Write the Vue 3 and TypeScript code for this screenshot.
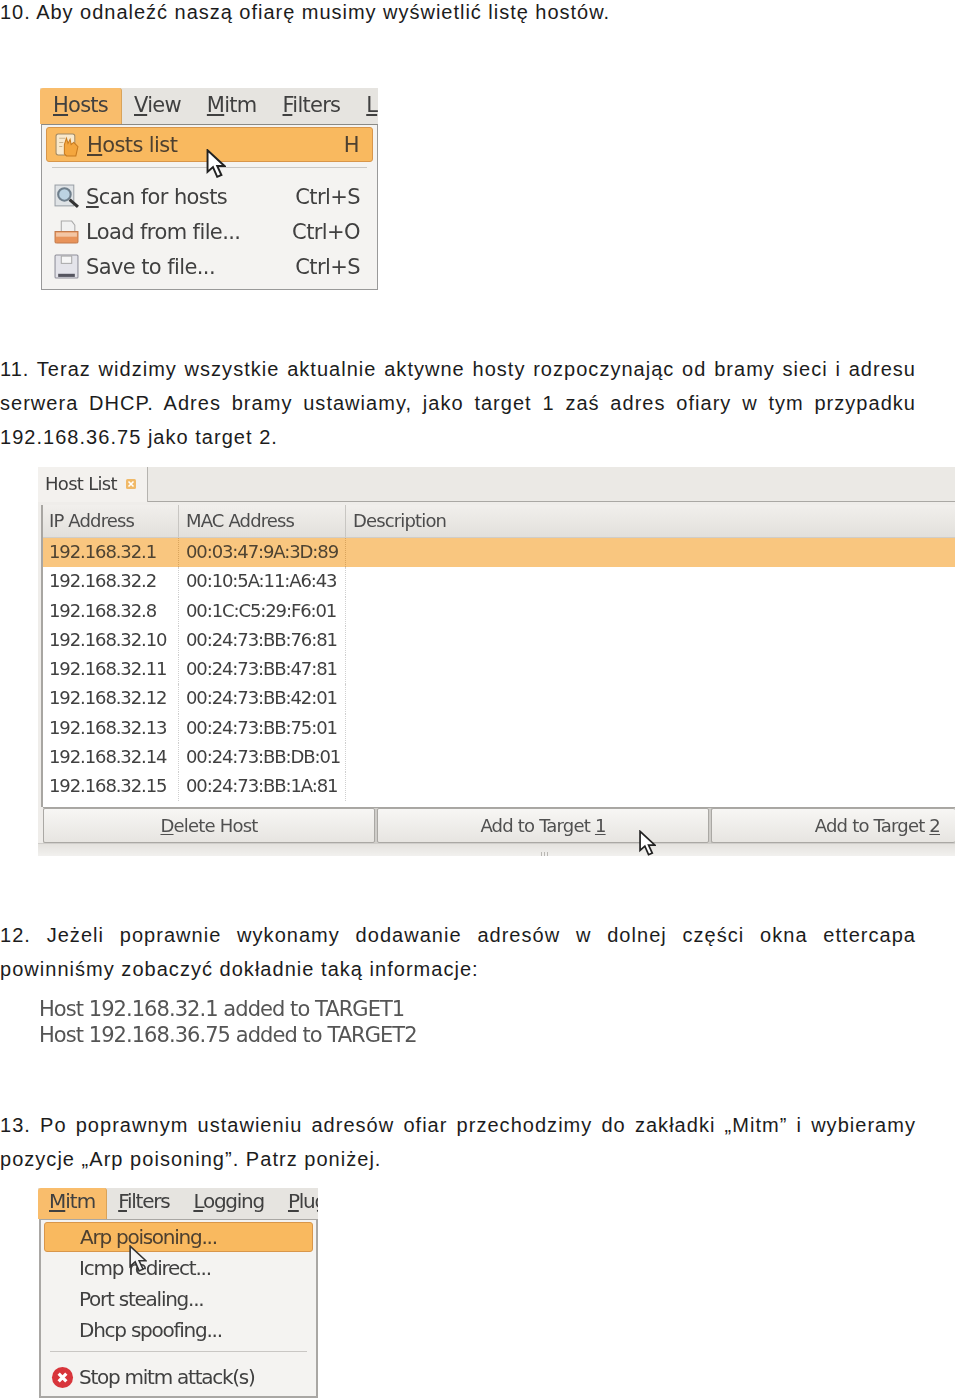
<script setup lang="ts">
const hosts: [string, string][] = [
  ['192.168.32.1', '00:03:47:9A:3D:89'],
  ['192.168.32.2', '00:10:5A:11:A6:43'],
  ['192.168.32.8', '00:1C:C5:29:F6:01'],
  ['192.168.32.10', '00:24:73:BB:76:81'],
  ['192.168.32.11', '00:24:73:BB:47:81'],
  ['192.168.32.12', '00:24:73:BB:42:01'],
  ['192.168.32.13', '00:24:73:BB:75:01'],
  ['192.168.32.14', '00:24:73:BB:DB:01'],
  ['192.168.32.15', '00:24:73:BB:1A:81'],
]
const mitmItems = ['Icmp redirect...', 'Port stealing...', 'Dhcp spoofing...']
const cursorPath = 'M1 1 L1 19 L5.5 15 L9 23 L12.5 21.5 L9 14 L15 14 Z'
</script>

<template>
  <main class="page">
    <p class="line first">10. Aby odnaleźć naszą ofiarę musimy wyświetlić listę hostów.</p>

    <section class="shot hosts-menu">
      <div class="menubar">
        <span class="tab active"><u>H</u>osts</span>
        <span class="tab"><u>V</u>iew</span>
        <span class="tab"><u>M</u>itm</span>
        <span class="tab"><u>F</u>ilters</span>
        <span class="tab"><u>L</u></span>
      </div>
      <div class="dropdown">
        <div class="item selected">
          <svg class="icon" viewBox="0 0 24 24"><rect x="1" y="2" width="18" height="20" rx="2" fill="#f9e9cc" stroke="#a08a66"/><path d="M4 6 H10 M4 10 H8 M4 14 H7" stroke="#c9b48f"/><path d="M9 21 V12 L11 6 L12.5 11 L14.5 7 L15.5 12 L18 10 L22 14 L20 23 H11 Z" fill="#f4a63e" stroke="#c87a1e"/></svg>
          <span class="label"><u>H</u>osts list</span><span class="key">H</span>
        </div>
        <div class="sep"></div>
        <div class="item">
          <svg class="icon" viewBox="0 0 24 24"><rect x="1" y="1" width="18" height="20" fill="#dfe3e6" stroke="#9aa0a6"/><circle cx="10" cy="10" r="6" fill="#bcd3e2" stroke="#6f7f8c" stroke-width="2"/><path d="M15 15 L23 22" stroke="#333" stroke-width="3"/></svg>
          <span class="label"><u>S</u>can for hosts</span><span class="key">Ctrl+S</span>
        </div>
        <div class="item">
          <svg class="icon" viewBox="0 0 24 24"><path d="M7 2 H17 L20 6 V13 H7 Z" fill="#f1f1f1" stroke="#aaa"/><path d="M1 12 H23 V22 Q23 23 21 23 H3 Q1 23 1 22 Z" fill="#e8935a" stroke="#c47a4a"/><path d="M2 13 H22 V17 H2 Z" fill="#f3c6a4"/></svg>
          <span class="label">Load from file...</span><span class="key">Ctrl+O</span>
        </div>
        <div class="item">
          <svg class="icon" viewBox="0 0 24 24"><rect x="1" y="1" width="22" height="22" rx="1" fill="#e4e4ea" stroke="#8d8d98"/><rect x="7" y="2" width="10" height="7" fill="#f6f6f6" stroke="#aaa"/><rect x="4" y="19" width="16" height="3" fill="#55555f"/></svg>
          <span class="label">Save to file...</span><span class="key">Ctrl+S</span>
        </div>
      </div>
      <svg class="cursor cursor-a" viewBox="0 0 16 24"><path :d="cursorPath" fill="#fff" stroke="#222" stroke-width="1.6"/></svg>
    </section>

    <p class="line gap-a justify">11. Teraz widzimy wszystkie aktualnie aktywne hosty rozpoczynając od bramy sieci i adresu</p>
    <p class="line justify">serwera DHCP. Adres bramy ustawiamy, jako target 1 zaś adres ofiary w tym przypadku</p>
    <p class="line">192.168.36.75 jako target 2.</p>

    <section class="shot host-list">
      <div class="notebook">
        <div class="nb-tab">Host List
          <svg class="close" viewBox="0 0 12 12"><rect x="1" y="1" width="10" height="10" rx="1.5" fill="#f0b968"/><path d="M3.5 3.5 L8.5 8.5 M8.5 3.5 L3.5 8.5" stroke="#fff" stroke-width="1.6"/></svg>
        </div>
        <div class="nb-rest"></div>
      </div>
      <div class="table">
        <div class="row head">
          <span class="cell">IP Address</span><span class="cell">MAC Address</span><span class="cell">Description</span>
        </div>
        <div v-for="(h, i) in hosts" :key="h[0]" class="row" :class="{ sel: i === 0 }">
          <span class="cell">{{ h[0] }}</span><span class="cell">{{ h[1] }}</span><span class="cell"></span>
        </div>
      </div>
      <div class="buttons">
        <div class="btn"><span><u>D</u>elete Host</span></div>
        <div class="btn"><span>Add to Target <u>1</u></span></div>
        <div class="btn btn-end"><span>Add to Target <u>2</u></span></div>
      </div>
      <div class="grip"><span class="dots"></span></div>
      <svg class="cursor cursor-b" viewBox="0 0 16 24"><path :d="cursorPath" fill="#fff" stroke="#222" stroke-width="1.6"/></svg>
    </section>

    <p class="line gap-a justify">12. Jeżeli poprawnie wykonamy dodawanie adresów w dolnej części okna ettercapa</p>
    <p class="line">powinniśmy zobaczyć dokładnie taką informacje:</p>

    <section class="shot log">
      <div>Host 192.168.32.1 added to TARGET1</div>
      <div>Host 192.168.36.75 added to TARGET2</div>
    </section>

    <p class="line gap-b justify">13. Po poprawnym ustawieniu adresów ofiar przechodzimy do zakładki „Mitm” i wybieramy</p>
    <p class="line">pozycje „Arp poisoning”. Patrz poniżej.</p>

    <section class="shot mitm-menu">
      <div class="menubar small">
        <span class="tab active"><u>M</u>itm</span>
        <span class="tab"><u>F</u>ilters</span>
        <span class="tab"><u>L</u>ogging</span>
        <span class="tab"><u>P</u>lug</span>
      </div>
      <div class="dropdown small">
        <div class="item selected"><span class="label">Arp poisoning...</span></div>
        <div v-for="m in mitmItems" :key="m" class="item"><span class="label">{{ m }}</span></div>
        <div class="sep"></div>
        <div class="item stop">
          <svg class="stop-icon" viewBox="0 0 24 24"><circle cx="12" cy="12" r="11" fill="#d8353b"/><path d="M8 8 L16 16 M16 8 L8 16" stroke="#fff" stroke-width="3.4"/></svg>
          <span class="label">Stop mitm attack(s)</span>
        </div>
      </div>
      <svg class="cursor cursor-c" viewBox="0 0 16 24"><path :d="cursorPath" fill="#f5f5f5" stroke="#333" stroke-width="1.4"/></svg>
    </section>
  </main>
</template>

<style>
html, body { background: #fff; }
</style>

<style scoped>
.page {
  width: 960px;
  height: 1399px;
  overflow: hidden;
  font-family: "Liberation Sans", Arial, sans-serif;
  color: #1c1c1c;
}
.line {
  margin: 0;
  width: 916px;
  height: 34px;
  line-height: 34px;
  font-size: 20px;
  letter-spacing: 1.03px;
  white-space: nowrap;
}
.first { height: 24px; line-height: 24px; letter-spacing: 0.98px; }
.justify { white-space: normal; text-align: justify; text-align-last: justify; }
.gap-a { margin-top: 62px; }
.gap-b { margin-top: 60px; }

.shot {
  position: relative;
  font-family: "DejaVu Sans", sans-serif;
  color: #404040;
  overflow: hidden;
}
.shot > * { filter: blur(0.55px); }
u { text-underline-offset: 2px; }

.hosts-menu { margin: 64px 0 0 40px; width: 338px; height: 202px; }
.mitm-menu { margin: 12px 0 0 38px; width: 280px; height: 210px; }

.menubar {
  display: flex;
  height: 36px;
  background: #e6e4e0;
  font-size: 21px;
  letter-spacing: -0.75px;
  align-items: center;
  overflow: hidden;
}
.menubar .tab { padding: 0 12px; line-height: 34px; height: 36px; margin-right: 2px; white-space: nowrap; }
.menubar .tab.active {
  background: #f9bd6c;
  padding: 0 13px;
  border-radius: 3px 3px 0 0;
  border-right: 1px solid #d9a35a;
  margin-right: 0;
}
.dropdown {
  box-sizing: border-box;
  height: 166px;
  margin-left: 1px;
  background: #f4f3f1;
  border: 1px solid #999;
  border-top-color: #8a8a86;
  padding: 2px 4px 0;
}
.item {
  display: flex;
  align-items: center;
  height: 35px;
  padding: 0 13px 0 8px;
  font-size: 21px;
  letter-spacing: -0.6px;
  white-space: nowrap;
}
.item.selected {
  background: #f9b95f;
  border: 1px solid #d8964a;
  border-radius: 3px;
  box-sizing: border-box;
  color: #4d4030;
}
.icon { width: 25px; height: 25px; margin-right: 7px; flex: none; }
.key { margin-left: auto; }
.sep { height: 1px; background: #c9c7c4; margin: 5px 6px 11px; }

.dropdown.small { height: 179px; margin: 0 0 0 1px; padding: 2px 3px 0; border-color: #a9a7a4; border-width: 1px 2px 2px; }
.small .item { height: 31px; padding-left: 35px; font-size: 20px; letter-spacing: -1.25px; }
.small .item.selected { height: 30px; }
.small .sep { margin: 6px 6px 7px; }
.small .item.stop { padding-left: 7px; height: 36px; }
.stop-icon { width: 23px; height: 23px; margin-right: 5px; flex: none; }
.menubar.small { height: 31px; font-size: 20px; letter-spacing: -1.25px; }
.menubar.small .tab { height: 31px; line-height: 26px; padding: 0 11px; }
.menubar.small .tab.active { padding: 0 11px; letter-spacing: -1px; }

.host-list { margin: 13px 0 0 38px; width: 917px; height: 389px; background: #efedea; }
.notebook { display: flex; height: 35px; }
.nb-tab {
  width: 110px;
  display: flex;
  align-items: center;
  gap: 8px;
  padding: 0 0 2px 7px;
  box-sizing: border-box;
  font-size: 18px;
  letter-spacing: -0.7px;
  border-right: 1px solid #b5b3af;
  background: #f3f1ee;
  color: #3f3f3f;
}
.close { width: 12px; height: 12px; }
.nb-rest { flex: 1; background: #ebe9e5; border-bottom: 1px solid #aaa8a4; }
.table {
  margin: 3px 0 0 3px;
  background: #fff;
  border-left: 2px solid #a8a6a2;
  height: 302px;
  overflow: hidden;
  box-sizing: border-box;
}
.row {
  display: grid;
  grid-template-columns: 136px 167px 1fr;
  height: 29.25px;
  align-items: stretch;
  font-size: 18px;
  letter-spacing: -1.1px;
}
.row .cell {
  padding-left: 7px;
  line-height: 27px;
  white-space: nowrap;
  border-right: 1px dotted #cfcfcf;
}
.row .cell:first-child { padding-left: 6px; }
.row .cell:last-child { border-right: 0; }
.head {
  height: 33px;
  background: linear-gradient(#f1efec, #e2e0dc);
  border-bottom: 1px solid #cfcdc9;
  box-sizing: border-box;
  color: #4c4c4c;
  letter-spacing: -0.85px;
}
.head .cell { line-height: 31px; border-right: 1px solid #c8c6c2; }
.row.sel { background: #f9c67f; color: #4e4332; }
.row.sel .cell { border-right-color: #d9a45c; }
.buttons {
  display: grid;
  grid-template-columns: 332px 332px 1fr;
  gap: 2px;
  margin: 0 0 0 5px;
  height: 35px;
  border-top: 1px solid #a8a6a2;
  box-sizing: content-box;
  background: #cfcdc9;
}
.btn {
  display: flex;
  align-items: center;
  justify-content: center;
  border: 1px solid #aaa8a4;
  border-radius: 2px;
  background: linear-gradient(#f7f6f4, #e7e5e1);
  font-size: 18px;
  letter-spacing: -0.8px;
  color: #505050;
}
.btn-end { justify-content: flex-end; padding-right: 15px; border-right: 0; }
.grip {
  height: 13px;
  display: flex;
  justify-content: center;
  align-items: flex-end;
  background: linear-gradient(#e4e2de, #f3f2f0);
  border-top: 1px solid #d0cecb;
}
.dots {
  width: 9px;
  height: 4px;
  margin: 0 0 1px 98px;
  background: repeating-linear-gradient(90deg, #b9b7b3 0 1px, transparent 1px 3px);
}

.cursor { position: absolute; width: 20px; height: 29px; filter: none; }
.cursor-a { left: 166px; top: 61px; }
.cursor-b { left: 601px; top: 363px; width: 17px; height: 26px; }
.cursor-c { left: 91px; top: 57px; width: 18px; height: 27px; }

.log {
  margin: 10px 0 0 39px;
  height: 52px;
  font-size: 21px;
  line-height: 26px;
  letter-spacing: -0.95px;
  color: #555;
  white-space: nowrap;
}
</style>
